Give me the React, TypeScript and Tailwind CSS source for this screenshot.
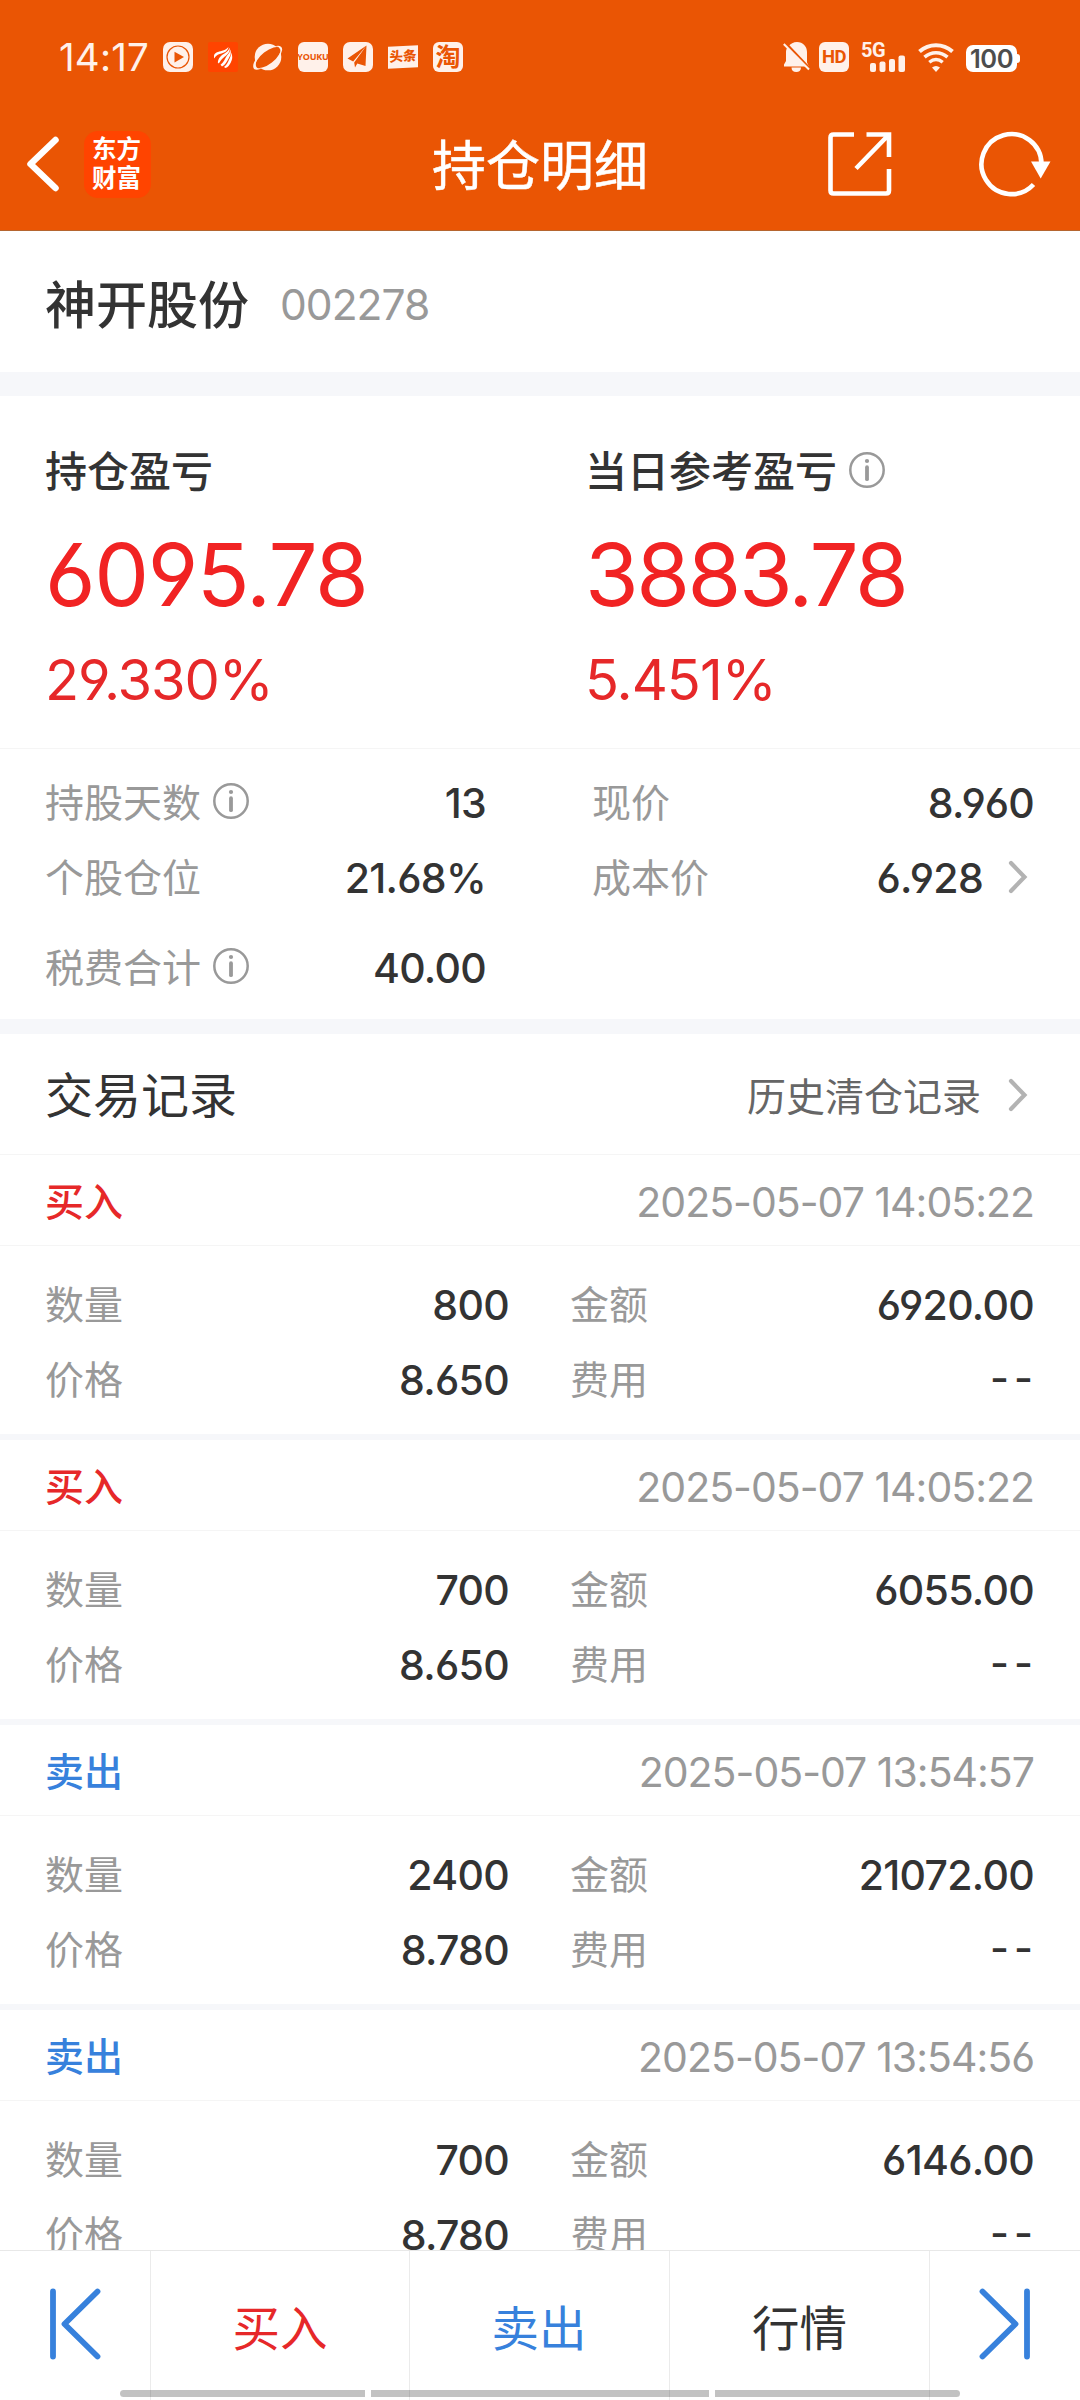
import type { ReactNode } from "react";

const num = "[font-feature-settings:'cv03','cv04']";

function Info() {
  return (
    <svg width="36" height="36" viewBox="0 0 36 36" fill="none" stroke="#999" className="shrink-0">
      <circle cx="18" cy="18" r="16.700" strokeWidth="2.500" />
      <path d="M18 15.200V27.200" strokeWidth="3.800" strokeLinecap="round" />
      <circle cx="18" cy="9" r="2.100" fill="#999" stroke="none" />
    </svg>
  );
}

function Chevron() {
  return (
    <svg width="20" height="34" viewBox="0 0 20 34" fill="none" stroke="#b3b3b3" strokeWidth="4.200" strokeLinecap="round" className="shrink-0">
      <path d="M3 3L16.500 17L3 31" />
    </svg>
  );
}

function StatusBar() {
  return (
    <div className="flex h-[72px] items-end pl-[59px] pr-[60px] text-[#fff1ea]">
      <span className="w-[104px] whitespace-nowrap text-[38.500px] leading-[30px] tracking-[0.200px]">14:17</span>
      <div className="flex gap-[15px]">
        <svg width="30" height="30" viewBox="0 0 30 30">
          <rect width="30" height="30" rx="7" fill="#fff1ea" />
          <circle cx="15" cy="15" r="11" fill="none" stroke="#ea5504" strokeWidth="1.200" />
          <path d="M11.500 9.800L21 15L11.500 20.600Z" fill="#ea5504" />
        </svg>
        <svg width="30" height="30" viewBox="0 0 30 30">
          <rect width="30" height="30" rx="2" fill="#ff4400" />
          <g fill="#fff">
            <path d="M6 14.500C6 11 9 10 12.500 9.200C16 8.300 18.500 7.500 20.500 5C20 8.500 17 10.500 13.500 11.500C11 12.200 8.500 12.800 6 16.500Z" />
            <path d="M9.800 20.500C10.500 15.500 13 13.500 16.500 11.500C19 10 20.800 8.500 21.500 5.800C22.500 10 19.500 12.500 16.500 14.800C13.500 17 12.500 19 10.800 21.500Z" />
            <path d="M12.500 22.800C16 20 16.500 17.500 18.200 14.800C19.800 12.200 22 11 22.200 7.500C23.800 11.500 22 14 20.300 17C18.800 19.800 17.500 22.500 14 24.500Z" />
            <path d="M16 25C19 22.500 19.800 20.500 21 17.800C22 15.500 23.200 14 23 10.500C25 14.500 24.300 17.500 22.800 20.500C21.500 23 20 25.200 17.500 26Z" />
          </g>
        </svg>
        <svg width="30" height="30" viewBox="0 0 30 30">
          <circle cx="15" cy="15" r="13.300" fill="#fff1ea" />
          <ellipse cx="15" cy="15.500" rx="15" ry="6.300" transform="rotate(-38 15 15.500)" fill="#ea5504" />
          <path d="M21 4.500C26 2.500 30 4 29 8.500C28 12.500 26 15 24 17C27 12.500 28 9 27 7C26 4.800 24.500 4.200 21 4.500ZM3 17C1 20 -0.500 23 0.500 26C2 29 7 27.500 10.500 25.500C6 27 3.500 26.500 3 24C2.600 22 3 19.500 4 17Z" fill="#fff1ea" />
        </svg>
        <span className="flex h-[30px] w-[30px] items-center justify-center rounded-[6px] bg-[#fff1ea] font-['Open_Sans'] text-[9px] font-bold tracking-[-0.200px] text-[#ea5504]">YOUKU</span>
        <svg width="30" height="30" viewBox="0 0 30 30">
          <rect width="30" height="30" rx="7" fill="#fff1ea" />
          <path d="M23.500 3.500L4.500 16.500L10.200 19.500ZM23.500 3.500L11.200 20.500L12 25.500L14.300 21.600L22.500 24Z" fill="#ea5504" />
        </svg>
        <span className="flex h-[30px] w-[30px] items-center justify-center">
          <span className="flex h-[22px] w-[30px] -skew-y-3 items-center justify-center bg-[#fff1ea] text-[13.500px] font-black leading-none text-[#ea5504]">头条</span>
        </span>
        <span className="flex h-[30px] w-[30px] items-center justify-center rounded-[6px] bg-[#fff1ea] text-[25px] font-bold leading-none text-[#ea5504]">淘</span>
      </div>
      <div className="ml-auto flex items-end">
        <svg width="27" height="30" viewBox="0 0 27 30" className="mr-[9px]">
          <path d="M5.500 4.500C7.500 1.500 10.500 0 14 0C20 0 24 4.500 24 10V20.500L26 24.500H1V22.500L3 19V10C3 7.500 4 5.500 5.500 4.500ZM8.500 25.500H18C18 28.500 16 30 13.300 30C10.500 30 8.500 28.500 8.500 25.500Z" fill="#fff1ea" />
          <path d="M2 0.500L28 28" stroke="#ea5504" strokeWidth="2.600" />
          <path d="M0.800 2L26 27.500" stroke="#fff1ea" strokeWidth="2" />
        </svg>
        <span className="mr-[12px] flex h-[30px] w-[30px] items-center justify-center rounded-[6px] bg-[#fff1ea] font-['Roboto'] text-[18.500px] font-bold leading-none tracking-[-0.500px] text-[#ea5504]">HD</span>
        <div className="relative mr-[13px] h-[30px] w-[44px]">
          <span className="absolute -top-px left-0 font-['Roboto'] text-[20px] font-bold leading-[18px] tracking-[-0.500px]">5G</span>
          <svg width="44" height="30" viewBox="0 0 44 30" fill="#fff1ea" className="absolute inset-0">
            <rect x="9" y="21" width="6" height="9" rx="2" />
            <rect x="18.500" y="19.500" width="6" height="10.500" rx="2" />
            <rect x="28" y="17" width="6" height="13" rx="2" />
            <rect x="37.500" y="13.500" width="6.500" height="16.500" rx="2" />
          </svg>
        </div>
        <svg width="36" height="29" viewBox="0 0 36 29" fill="none" stroke="#fff1ea" className="mr-[12px]">
          <path d="M1.500 8.500C11 0 25 0 34.500 8.500" strokeWidth="4" />
          <path d="M6.500 14.200C13.500 8.200 22.500 8.200 29.500 14.200" strokeWidth="3.600" />
          <path d="M11.300 19.300C15.500 15.800 20.500 15.800 24.700 19.300" strokeWidth="3.400" />
          <path d="M18 29L14 24.500C16.500 22.500 19.500 22.500 22 24.500Z" fill="#fff1ea" stroke="none" />
        </svg>
        <div className="flex items-center">
          <span className="flex h-[27px] w-[51px] items-center justify-center rounded-[7px] bg-white pt-px text-[25.500px] font-semibold leading-none tracking-[-0.500px] text-[#4d4d4d]">100</span>
          <span className="h-[9px] w-[3px] rounded-r-[3px] bg-white" />
        </div>
      </div>
    </div>
  );
}

function Header() {
  return (
    <header className="h-[231px] border-b border-[#b5652f] bg-[#ea5504]">
      <StatusBar />
      <div className="grid h-[184px] grid-cols-3 items-center">
        <div className="flex items-center pl-[26px]">
          <svg width="34" height="56" viewBox="0 0 34 56" fill="none" stroke="#fff" strokeWidth="6.500" strokeLinecap="round" strokeLinejoin="round">
            <path d="M29.500 4L4.500 28L29.500 52" />
          </svg>
          <div className="ml-[24px] flex h-[67px] w-[67px] flex-col items-center justify-center rounded-[14px] bg-[#ff4400] pb-px pr-[2px] text-[24.500px] font-bold leading-[29px] text-white">
            <span>东方</span>
            <span>财富</span>
          </div>
        </div>
        <h1 className="whitespace-nowrap pt-[5px] text-center text-[54px] leading-none text-white [-webkit-text-stroke:0.500px_white]">持仓明细</h1>
        <div className="flex items-center justify-end pr-[29px]">
          <svg width="64" height="64" viewBox="0 0 64 64" fill="none" stroke="#fff" strokeWidth="4.600">
            <path d="M26 2.500H5.500Q2.500 2.500 2.500 5.500V58.500Q2.500 61.500 5.500 61.500H58Q61 61.500 61 58.500V37" />
            <path d="M38.500 2.500H61V25M61 2.500L28 36.500" />
          </svg>
          <svg width="72" height="66" viewBox="0 0 72 66" fill="none" className="ml-[87px]">
            <path d="M54.500 53.500A30 30 0 1 1 62.500 33" stroke="#fff" strokeWidth="4.600" />
            <path d="M52 30.500H71.500L61.700 47.500Z" fill="#fff" />
          </svg>
        </div>
      </div>
    </header>
  );
}

function Stat({ label, info, value, pct, valueClass, pctClass }: { label: string; info?: boolean; value: string; pct: string; valueClass: string; pctClass: string }) {
  return (
    <div className="w-[540px] pl-[45px] pt-[54px]">
      <div className="flex h-[42px] items-center gap-[12px] text-[42px] font-medium leading-[42px] text-[#333]">
        <span className="pt-[2px]">{label}</span>
        {info && <span className="-mt-[2px]"><Info /></span>}
      </div>
      <div className={`mt-[39px] text-[87px] leading-[88px] text-[#f12323] ${valueClass} ${num}`}>{value}</div>
      <div className={`mt-[33px] text-[56px] leading-[56px] text-[#e62829] ${pctClass} ${num}`}>{pct}</div>
    </div>
  );
}

function Field({ label, value, info, arrow, className }: { label: string; value: string; info?: boolean; arrow?: boolean; className: string }) {
  return (
    <div className={`flex h-[75px] items-center ${className}`}>
      <span className="mr-[12px] whitespace-nowrap pt-px text-[39px] leading-none text-[#999]">{label}</span>
      {info && <span className="-mt-[2px]"><Info /></span>}
      {value === "--" ? (
        <span className="-mr-[4px] -mt-px ml-auto text-[41px] font-medium leading-none tracking-[5px] text-[#333]">{value}</span>
      ) : (
        <span className={`ml-auto pt-[3px] text-[41px] font-medium leading-none tracking-[-0.700px] text-[#333] ${num}`}>{value}</span>
      )}
      {arrow && <span className="ml-[25px] mr-[6px] flex"><Chevron /></span>}
    </div>
  );
}

type Trade = { side: "买入" | "卖出"; time: string; qty: string; amount: string; price: string };

const trades: Trade[] = [
  { side: "买入", time: "2025-05-07 14:05:22", qty: "800", amount: "6920.00", price: "8.650" },
  { side: "买入", time: "2025-05-07 14:05:22", qty: "700", amount: "6055.00", price: "8.650" },
  { side: "卖出", time: "2025-05-07 13:54:57", qty: "2400", amount: "21072.00", price: "8.780" },
  { side: "卖出", time: "2025-05-07 13:54:56", qty: "700", amount: "6146.00", price: "8.780" },
];

function TradeCard({ t }: { t: Trade }) {
  return (
    <article className="border-b-[6px] border-[#f6f7fa]">
      <div className="flex h-[91px] items-center justify-between border-b border-[#f5f5f5] pl-[45px] pr-[46px] pt-[3px]">
        <span className={t.side === "买入" ? "text-[39px] font-medium leading-none text-[#e62829]" : "text-[39px] font-medium leading-none text-[#3781dc]"}>{t.side}</span>
        <span className={`pt-px text-[41px] leading-none tracking-[-1px] text-[#999] ${num}`}>{t.time}</span>
      </div>
      <div className="grid h-[188px] grid-cols-[509px_1fr] content-start pt-[20px]">
        <Field label="数量" value={t.qty} className="pl-[45px]" />
        <Field label="金额" value={t.amount} className="pl-[61px] pr-[46px]" />
        <Field label="价格" value={t.price} className="pl-[45px]" />
        <Field label="费用" value="--" className="pl-[61px] pr-[46px]" />
      </div>
    </article>
  );
}

function Tab({ children, className }: { children: ReactNode; className: string }) {
  return <div className={`flex items-center justify-center border-r border-[#ebebeb] text-[47.500px] leading-none ${className}`}>{children}</div>;
}

function Footer() {
  return (
    <footer className="relative grid h-[150px] shrink-0 grid-cols-[151px_259px_260px_260px_150px] border-t border-[#e8e8e8] bg-white">
      <Tab className="pb-[4px]">
        <svg width="52" height="74" viewBox="0 0 52 74" fill="none" stroke="#3781dc" strokeWidth="5.800" strokeLinecap="round" strokeLinejoin="round">
          <path d="M4 4.500V69.500M48.500 4.500L15.500 37L48.500 69.500" />
        </svg>
      </Tab>
      <Tab className="pt-[6px] text-[#e62829]">买入</Tab>
      <Tab className="pr-px pt-[6px] text-[#3781dc]">卖出</Tab>
      <Tab className="pt-[6px] text-[#333]">行情</Tab>
      <div className="flex items-center justify-center pb-[4px]">
        <svg width="52" height="74" viewBox="0 0 52 74" fill="none" stroke="#3781dc" strokeWidth="5.800" strokeLinecap="round" strokeLinejoin="round">
          <path d="M48 4.500V69.500M3.500 4.500L36.500 37L3.500 69.500" />
        </svg>
      </div>
      <div className="absolute bottom-[3px] left-[120px] flex h-[7px] w-[840px] gap-[6px]">
        <span className="w-[245px] rounded-l-full bg-black/24" />
        <span className="w-[338px] bg-black/24" />
        <span className="w-[245px] rounded-r-full bg-black/24" />
      </div>
    </footer>
  );
}

export default function App() {
  return (
    <div className="flex h-[2400px] w-[1080px] flex-col overflow-hidden bg-white font-['Inter','Noto_Sans_CJK_SC',sans-serif]">
      <Header />
      <main className="min-h-0 flex-1 overflow-hidden">
        <section className="flex h-[141px] items-center gap-[31px] pl-[45px] pt-[7px]">
          <h2 className="text-[51px] font-medium leading-none text-[#333]">神开股份</h2>
          <span className={`text-[42.500px] leading-none tracking-[-1px] text-[#999] ${num}`}>002278</span>
        </section>
        <div className="h-[24px] bg-[#f6f7fa]" />
        <section className="flex h-[353px] border-b border-[#f5f5f5]">
          <Stat label="持仓盈亏" value="6095.78" pct="29.330%" valueClass="tracking-[-1.400px]" pctClass="tracking-[-1.100px]" />
          <Stat label="当日参考盈亏" info value="3883.78" pct="5.451%" valueClass="tracking-[-2.500px]" pctClass="tracking-[-1px]" />
        </section>
        <section className="grid h-[270px] grid-cols-[486px_1fr] content-start pt-[15px]">
          <Field label="持股天数" info value="13" className="pl-[45px]" />
          <Field label="现价" value="8.960" className="pl-[106px] pr-[46px]" />
          <Field label="个股仓位" value="21.68%" className="pl-[45px]" />
          <Field label="成本价" value="6.928" arrow className="pl-[106px] pr-[46px]" />
          <Field label="税费合计" info value="40.00" className="mt-[15px] pl-[45px]" />
        </section>
        <div className="h-[15px] bg-[#f6f7fa]" />
        <section className="flex h-[121px] items-center border-b border-[#f5f5f5] pl-[45px] pr-[52px]">
          <h3 className="pt-[3px] text-[48px] leading-none text-[#333]">交易记录</h3>
          <span className="ml-auto mr-[27px] pt-[5px] text-[39px] leading-none text-[#666]">历史清仓记录</span>
          <span className="flex pt-[2px]"><Chevron /></span>
        </section>
        {trades.map((t, i) => (
          <TradeCard key={i} t={t} />
        ))}
      </main>
      <Footer />
    </div>
  );
}
